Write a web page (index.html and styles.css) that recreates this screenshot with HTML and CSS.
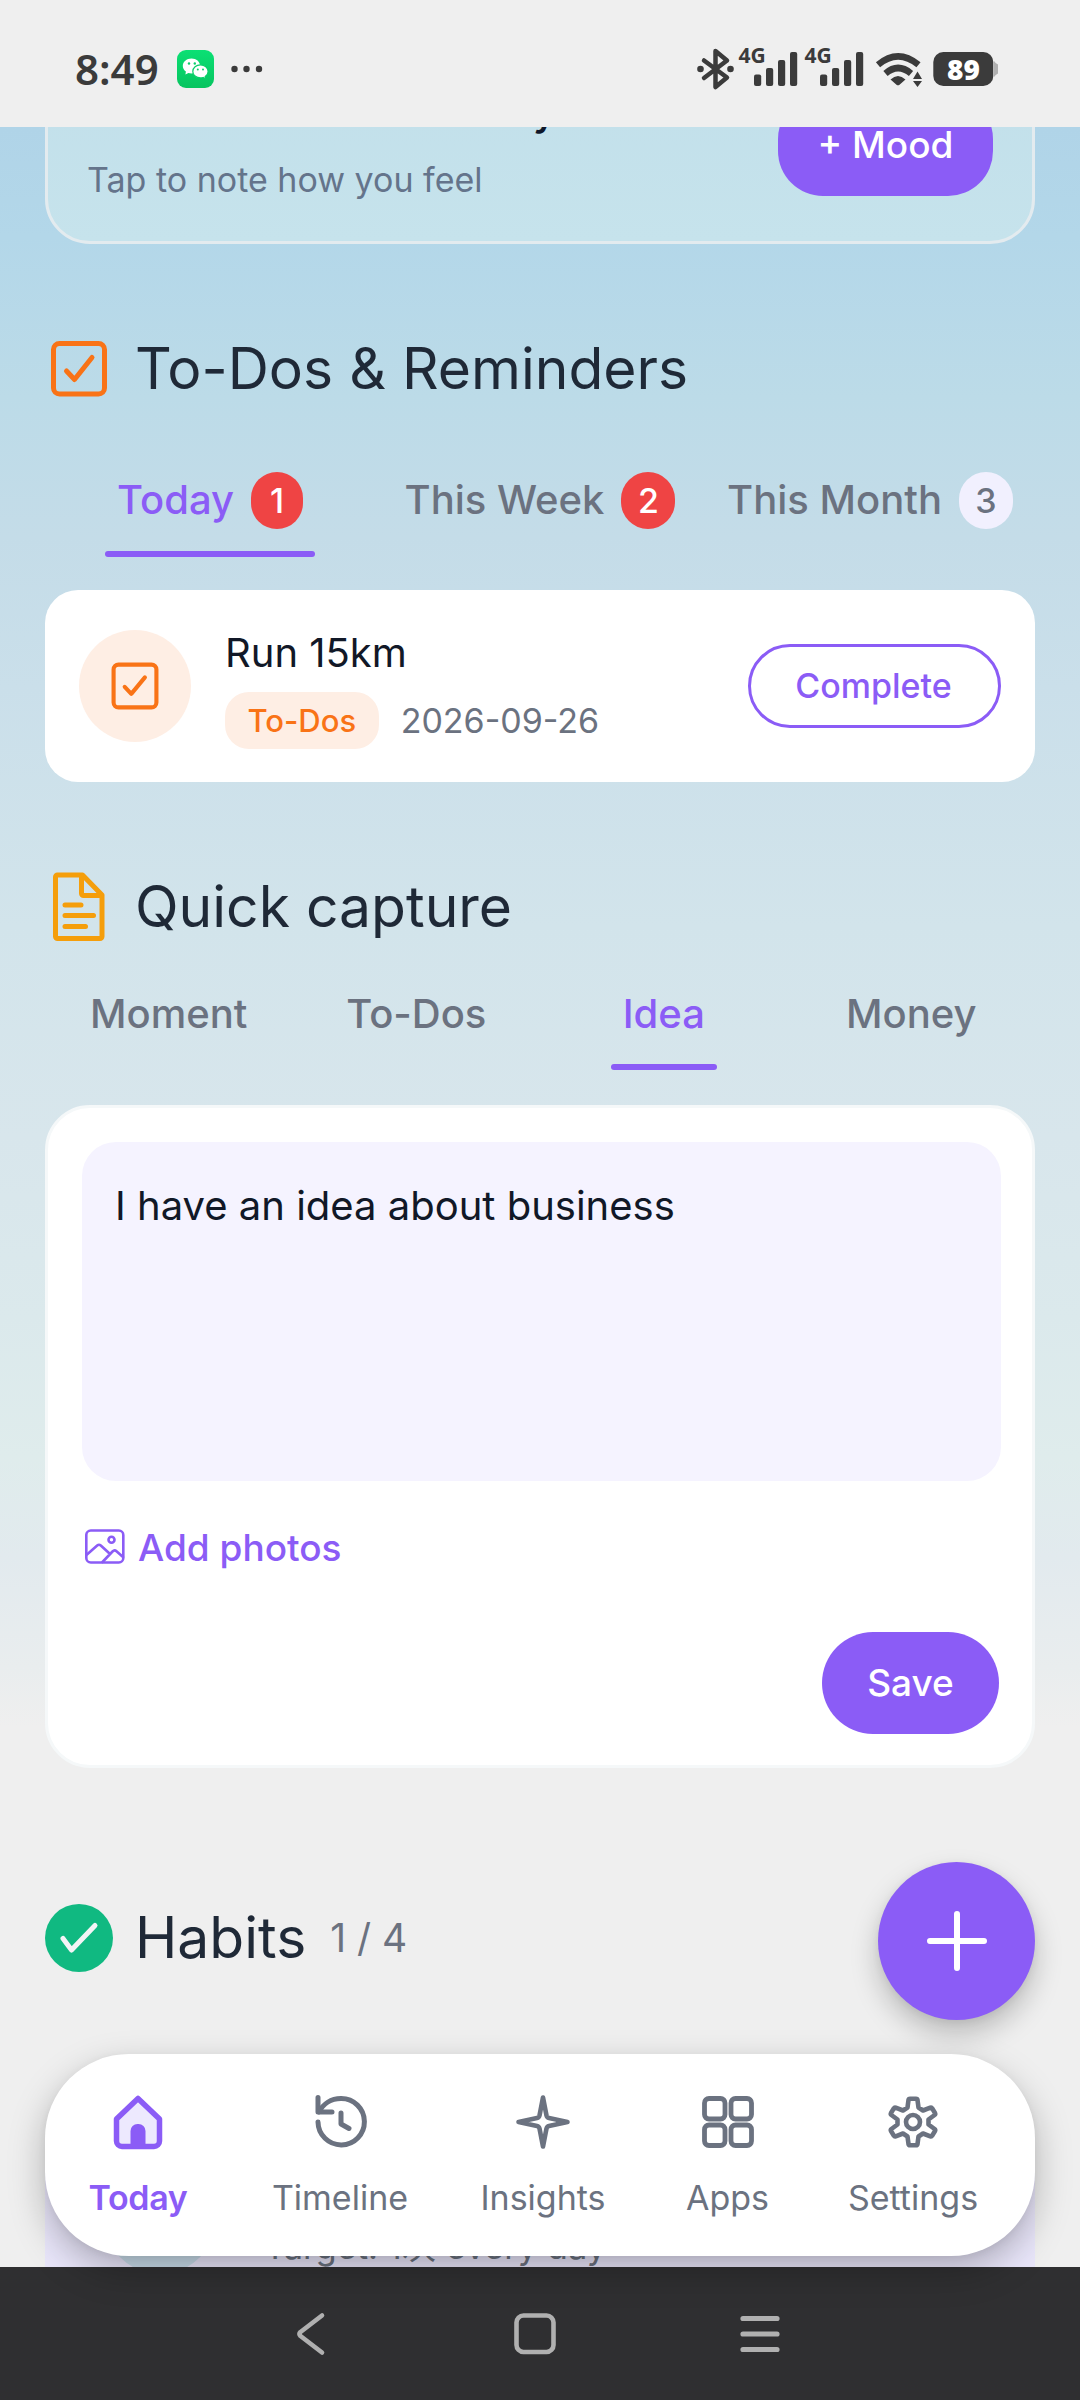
FILE: index.html
```html
<!DOCTYPE html>
<html lang="en">
<head>
<meta charset="utf-8">
<title>Today</title>
<link rel="stylesheet" href="styles.css">
</head>
<body>
<div class="phone">
  <header class="status">
    <div class="status-left">
      <span class="clock">8:49</span>
      <svg class="wechat" width="37" height="38" viewBox="0 0 37 38">
        <defs><linearGradient id="wx" x1="0" y1="0" x2="0" y2="1"><stop offset="0" stop-color="#0be074"/><stop offset="1" stop-color="#07c45f"/></linearGradient></defs>
        <rect width="37" height="38" rx="9" fill="url(#wx)"/>
        <path fill="#fff" d="M14.5 8.500c-4.900 0-8.700 3.300-8.700 7.400 0 2.200 1.200 4.200 3.100 5.600l-.5 3 3-1.500c1 .3 2 .4 3.100.4 4.900 0 8.600-3.300 8.600-7.500s-3.800-7.400-8.600-7.400z"/>
        <path fill="#fff" stroke="#08cf68" stroke-width="1.200" d="M23.500 14.800c-4.300 0-7.700 2.900-7.700 6.600s3.400 6.500 7.700 6.500c.9 0 1.800-.1 2.600-.4l2.700 1.500-.6-2.500c1.800-1.200 2.900-3 2.900-5.100 0-3.700-3.400-6.600-7.600-6.600z"/>
        <g fill="#0ad06a"><circle cx="12" cy="13.500" r="1.200"/><circle cx="17.800" cy="13.500" r="1.200"/><circle cx="20.800" cy="19.500" r="1"/><circle cx="26" cy="19.500" r="1"/></g>
      </svg>
      <svg width="32" height="8" viewBox="0 0 32 8" fill="#3b3b3b"><circle cx="3.500" cy="4" r="3.200"/><circle cx="15.500" cy="4" r="3.200"/><circle cx="28" cy="4" r="3.200"/></svg>
    </div>
    <svg class="status-right" width="304" height="56" viewBox="696 36 304 56" fill="#3b3b3b">
      <g fill="none" stroke="#3b3b3b" stroke-width="4.500" stroke-linecap="round" stroke-linejoin="round">
        <path d="M704 60.500L727 77.500 715.500 87V51L727 60.500 704 78"/>
      </g>
      <circle cx="700.500" cy="69" r="3.300"/><circle cx="730.500" cy="69" r="3.300"/>
      <text class="net" x="738.500" y="63">4G</text>
      <rect x="754" y="74.500" width="7.200" height="11.500" rx="2"/><rect x="766" y="68" width="7.200" height="18" rx="2"/><rect x="778" y="60" width="7.200" height="26" rx="2"/><rect x="790" y="52" width="7.200" height="34" rx="2"/>
      <text class="net" x="804.500" y="63">4G</text>
      <rect x="820" y="74.500" width="7.200" height="11.500" rx="2"/><rect x="832" y="68" width="7.200" height="18" rx="2"/><rect x="844" y="60" width="7.200" height="26" rx="2"/><rect x="856" y="52" width="7.200" height="34" rx="2"/>
      <g fill="none" stroke="#3b3b3b" stroke-width="6.500">
        <path d="M878 64.800Q898 48 918.500 64.800"/>
        <path d="M885.500 73.500Q898 62.500 911 73.500"/>
      </g>
      <path d="M890.500 79.500Q898 72.500 905.500 79.500L899.500 84.700Q898 86 896.500 84.700Z"/>
      <path d="M917.500 71.500L922 79H913ZM917.500 87L922 81H913Z"/>
      <rect x="933.300" y="52" width="60" height="34" rx="10"/>
      <path fill="#b0b0b0" d="M994 61Q995.500 63.500 998 64.500V73.500Q995.500 74.500 994 77Z"/>
      <text class="batt" x="963.500" y="79.500" text-anchor="middle">89</text>
    </svg>
  </header>

  <main class="content">
    <section class="mood">
      <div class="mood-text">
        <div class="mood-title">Mood today</div>
        <div class="mood-sub">Tap to note how you feel</div>
      </div>
      <div class="btn mood-btn">+ Mood</div>
    </section>

    <h2 class="head head-todos">
      <svg class="head-icon" width="68" height="68" viewBox="0 0 68 68" fill="none" stroke="#f97316" stroke-width="5" stroke-linecap="round" stroke-linejoin="round">
        <rect x="8.500" y="8.500" width="51" height="50.500" rx="6"/>
        <path d="M21.500 36L29.500 44.500L47 22.500"/>
      </svg>
      <span>To-Dos &amp; Reminders</span>
    </h2>
    <div class="tabs tabs-3">
      <div class="tab active"><span>Today</span><span class="badge">1</span></div>
      <div class="tab"><span>This Week</span><span class="badge two">2</span></div>
      <div class="tab"><span>This Month</span><span class="badge soft">3</span></div>
    </div>
    <article class="todo">
      <div class="todo-icon">
        <svg width="56" height="56" viewBox="0 0 68 68" fill="none" stroke="#f97316" stroke-width="5" stroke-linecap="round" stroke-linejoin="round">
          <rect x="8" y="8" width="52" height="52" rx="6"/>
          <path d="M21.500 35L29.500 43.500L46 23.500"/>
        </svg>
      </div>
      <div class="todo-body">
        <div class="todo-title">Run 15km</div>
        <div class="todo-meta"><span class="chip">To-Dos</span><span class="date">2026-09-26</span></div>
      </div>
      <div class="btn-outline">Complete</div>
    </article>

    <h2 class="head head-quick">
      <svg class="head-icon" width="68" height="76" viewBox="0 0 68 76" fill="none" stroke="#f59e0b" stroke-width="5" stroke-linecap="round" stroke-linejoin="round">
        <path d="M12 6H37.500L57 26V67.500a2 2 0 0 1-2 2H12.500a2 2 0 0 1-2-2V8a2 2 0 0 1 2-2z"/>
        <path d="M36.500 7.500V24.500a2 2 0 0 0 2 2H56"/>
        <path d="M20 36H36M20 46.500H48.500M20 57.500H40.500"/>
      </svg>
      <span>Quick capture</span>
    </h2>
    <div class="tabs tabs-4">
      <div class="tab">Moment</div>
      <div class="tab">To-Dos</div>
      <div class="tab active">Idea</div>
      <div class="tab">Money</div>
    </div>
    <section class="capture">
      <div class="note">I have an idea about business</div>
      <div class="add">
        <svg width="42" height="38" viewBox="0 0 42 38" fill="none" stroke="#8b5cf6" stroke-width="2.600" stroke-linecap="round" stroke-linejoin="round">
          <rect x="2.300" y="2.500" width="37" height="32" rx="4.500"/>
          <circle cx="27.500" cy="11.800" r="3"/>
          <path d="M3 26.500L13.200 17.500Q15 16 16.800 17.500L25.500 25.500M18.500 34L28.500 23.500Q30.500 21.500 32.500 23.300L39 29"/>
        </svg>
        <span>Add photos</span>
      </div>
      <div class="btn save">Save</div>
    </section>

    <h2 class="head head-habits">
      <svg class="head-icon" width="68" height="68" viewBox="0 0 68 68">
        <circle cx="34" cy="34" r="34" fill="#10b981"/>
        <path d="M18 34.500L26.500 46L50 21.500" fill="none" stroke="#f3f4f6" stroke-width="5" stroke-linecap="round" stroke-linejoin="round"/>
      </svg>
      <span>Habits</span><small>1 / 4</small>
    </h2>
    <article class="habit">
      <div class="habit-dot"></div>
      <div class="habit-target">Target: 1次 every day</div>
    </article>
  </main>

  <div class="fab">
    <svg width="64" height="64" viewBox="0 0 64 64" stroke="#fff" stroke-width="6" stroke-linecap="round"><path d="M32 5V59M5 32H59"/></svg>
  </div>

  <nav class="nav">
    <div class="nav-item active">
      <svg width="60" height="60" viewBox="0 0 60 60" fill="none" stroke="#8b5cf6" stroke-width="5.500" stroke-linecap="round" stroke-linejoin="round">
        <path fill="#ede9fe" d="M30 6.500L51.500 27V49a5.500 5.500 0 0 1-5.500 5.500H14A5.500 5.500 0 0 1 8.500 49V27Z"/>
        <path fill="#8b5cf6" stroke="none" d="M22.500 55V39a7 7 0 0 1 7-7h1a7 7 0 0 1 7 7V55Z"/>
      </svg>
      <span>Today</span>
    </div>
    <div class="nav-item">
      <svg width="60" height="60" viewBox="-1 0 60 60" fill="none" stroke="#6b7280" stroke-width="5" stroke-linecap="round" stroke-linejoin="round">
        <path d="M7 5.500V20H21"/>
        <path d="M8 20C12 12 20 6.500 30 6.500A23.200 23.200 0 1 1 7 30"/>
        <path d="M30 21V32L38 36.500"/>
      </svg>
      <span>Timeline</span>
    </div>
    <div class="nav-item">
      <svg width="60" height="60" viewBox="0 0 60 60" fill="none" stroke="#6b7280" stroke-width="4.600" stroke-linecap="round" stroke-linejoin="round">
        <path d="M30 5.500L33.500 23.500Q34 25.600 36 26L54.500 30L36 34Q34 34.400 33.500 36.500L30 54.500L26.500 36.500Q26 34.400 24 34L5.500 30L24 26Q26 25.600 26.500 23.500Z"/>
      </svg>
      <span>Insights</span>
    </div>
    <div class="nav-item">
      <svg width="60" height="60" viewBox="0 0 60 60" fill="none" stroke="#6b7280" stroke-width="4.800">
        <rect x="6.500" y="6.500" width="20.500" height="20.500" rx="4.500"/><rect x="33" y="6.500" width="20.500" height="20.500" rx="4.500"/>
        <rect x="6.500" y="33" width="20.500" height="20.500" rx="4.500"/><rect x="33" y="33" width="20.500" height="20.500" rx="4.500"/>
      </svg>
      <span>Apps</span>
    </div>
    <div class="nav-item">
      <svg width="60" height="60" viewBox="0 0 60 60" fill="none" stroke="#6b7280" stroke-width="4.600" stroke-linejoin="round">
        <path d="M27 6.800H33Q34.300 6.800 34.500 8L35.500 15.500L40 18.500L47.300 15.600Q48.500 15.200 49.100 16.300L52 21Q52.600 22.200 51.600 23L45.500 27.500V32.500L51.600 37Q52.600 37.800 52 39L49.100 43.700Q48.500 44.800 47.300 44.400L40 41.500L35.500 44.500L34.500 52Q34.300 53.200 33 53.200H27Q25.700 53.200 25.500 52L24.500 44.500L20 41.500L12.700 44.400Q11.500 44.800 10.900 43.700L8 39Q7.400 37.800 8.400 37L14.500 32.500V27.500L8.400 23Q7.400 22.200 8 21L10.900 16.300Q11.500 15.200 12.700 15.600L20 18.500L24.500 15.500L25.500 8Q25.700 6.800 27 6.800Z"/>
        <circle cx="30" cy="30" r="7"/>
      </svg>
      <span>Settings</span>
    </div>
  </nav>

  <footer class="system">
    <svg width="42" height="48" viewBox="0 0 42 48" fill="none" stroke="#b0b0b0" stroke-width="4.600" stroke-linecap="round" stroke-linejoin="round"><path d="M31 5.500L9.500 22Q7.500 24 9.500 26L31 42.500"/></svg>
    <svg class="sys-home" width="48" height="48" viewBox="0 0 48 48" fill="none" stroke="#b0b0b0" stroke-width="4.600"><rect x="5.500" y="5.500" width="37" height="36.500" rx="7"/></svg>
    <svg class="sys-menu" width="48" height="48" viewBox="0 0 48 48" fill="none" stroke="#b0b0b0" stroke-width="5.200" stroke-linecap="round"><path d="M7 8.500H41M7 24H41M7 39.500H41"/></svg>
  </footer>
</div>
</body>
</html>
```
FILE: styles.css
```css
* { box-sizing: border-box; }

body {
  margin: 0;
  font-family: Inter, "Noto Sans CJK SC", sans-serif;
  color: #111827;
}

svg { display: block; flex: none; }

.phone {
  position: relative;
  width: 1080px;
  height: 2400px;
  display: flex;
  flex-direction: column;
  overflow: hidden;
  background: #efefef;
}

/* status bar */
.status {
  height: 127px;
  flex: none;
  display: flex;
  align-items: flex-start;
  justify-content: space-between;
  padding: 36px 80px 0 75px;
  background: #efefef;
}
.status-left {
  display: flex;
  align-items: center;
  height: 66px;
}
.clock {
  width: 102px;
  font: 600 42px/60px "Noto Sans", sans-serif;
  color: #3b3b3b;
}
.wechat { margin-right: 17px; }
.net { font: 700 21px "Noto Sans", sans-serif; }
.batt { font: 800 28px "Open Sans", sans-serif; fill: #fff; }

/* scrolling content */
.content {
  height: 2140px;
  flex: none;
  padding: 0 45px;
  overflow: hidden;
  background: linear-gradient(#b0d4e8 0, #b3d7e9 110px, #bcdbe8 270px, #c4dce8 410px, #cadfea 560px, #d2e4eb 800px, #d8e6ec 1010px, #dbe9ec 1190px, #dfecec 1330px, #e2eaee 1430px, #e9edee 1540px, #efefef 1600px);
}

.btn {
  display: flex;
  align-items: center;
  justify-content: center;
  background: #8b5cf6;
  color: #fff;
  font-weight: 500;
  font-size: 37px;
}

.mood {
  height: 194px;
  margin-top: -77px;
  padding: 24px 39px 27px 39px;
  display: flex;
  justify-content: space-between;
  align-items: flex-start;
  border: 3px solid #e3ebef;
  border-radius: 45px;
  background: linear-gradient(#c1dfea, #c6e3ec);
}
.mood-title {
  width: 470px;
  height: 60px;
  font-size: 42px;
  line-height: 66px;
  font-weight: 500;
  text-align: right;
  color: #0f172a;
  white-space: nowrap;
}
.mood-sub {
  margin-top: 23px;
  font-size: 34px;
  line-height: 40px;
  color: #64748b;
}
.mood-btn {
  width: 215px;
  height: 102px;
  margin-top: 17px;
  padding-bottom: 1px;
  border-radius: 45px;
}

.head {
  margin: 0;
  display: flex;
  align-items: center;
  height: 76px;
  font-size: 57px;
  line-height: 76px;
  font-weight: 400;
  color: #1f2937;
}
.head-icon { margin-right: 22px; }
.head small {
  margin-left: 24px;
  font-size: 39px;
  color: #6b7280;
}
.head-todos { margin-top: 87px; }
.head-quick { margin-top: 87px; }
.head-habits { margin-top: 132px; }

.tabs { display: grid; justify-items: center; }
.tabs-3 { grid-template-columns: repeat(3, 1fr); margin-top: 65px; }
.tabs-4 { grid-template-columns: repeat(4, 1fr); margin-top: 41px; }
.tab {
  position: relative;
  display: flex;
  align-items: flex-start;
  gap: 17px;
  height: 85px;
  padding: 0 12px;
  font-size: 40px;
  line-height: 55px;
  font-weight: 500;
  color: #6b7280;
}
.tab.active { color: #8b5cf6; }
.tab.active::after {
  content: "";
  position: absolute;
  left: 0;
  right: 0;
  bottom: 0;
  height: 6px;
  border-radius: 3px;
  background: #8b5cf6;
}
.tabs-4 .tab { height: 84px; }
.badge {
  width: 52px;
  height: 57px;
  border-radius: 27px;
  background: #ef4444;
  color: #fff;
  font-size: 34px;
  line-height: 57px;
  text-align: center;
}
.badge.two, .badge.soft { width: 54px; }
.badge.soft { background: #f1f0fe; color: #6b7280; }

.todo {
  display: flex;
  align-items: center;
  height: 192px;
  margin-top: 33px;
  padding: 0 34px;
  border-radius: 33px;
  background: #fff;
}
.todo-icon {
  display: flex;
  align-items: center;
  justify-content: center;
  width: 112px;
  height: 112px;
  border-radius: 50%;
  background: #feeee4;
}
.todo-body { flex: 1; padding: 5px 0 0 34px; }
.todo-title { margin-bottom: 14px; font-size: 40px; line-height: 50px; }
.todo-meta { display: flex; align-items: center; gap: 22px; }
.chip {
  height: 57px;
  padding: 0 22.500px;
  border-radius: 24px;
  background: #feeee4;
  color: #f97316;
  font-size: 31px;
  line-height: 57px;
  font-weight: 500;
}
.date { font-size: 34px; color: #6b7280; }
.btn-outline {
  width: 253px;
  height: 84px;
  padding-right: 2px;
  border: 3px solid #8b5cf6;
  border-radius: 42px;
  font-size: 34px;
  line-height: 78px;
  font-weight: 500;
  color: #8b5cf6;
  text-align: center;
}

.capture {
  height: 663px;
  margin-top: 35px;
  padding: 34px 31px 31px 34px;
  display: flex;
  flex-direction: column;
  border: 3px solid #f5f8f9;
  border-radius: 45px;
  background: #fff;
}
.note {
  height: 339px;
  padding: 38px 33px;
  border-radius: 34px;
  background: #f5f3ff;
  font-size: 40px;
  line-height: 52px;
}
.add {
  display: flex;
  align-items: center;
  gap: 12px;
  height: 48px;
  margin-top: 42px;
  padding-left: 2px;
  font-size: 37px;
  font-weight: 500;
  color: #8b5cf6;
}
.save {
  width: 177px;
  height: 102px;
  margin: auto 2px 0 auto;
  padding-bottom: 1px;
  border-radius: 51px;
}

.habit {
  display: flex;
  align-items: flex-end;
  height: 190px;
  margin-top: 154px;
  padding: 0 34px 46px 59px;
  border-radius: 33px;
  background: #e9e6fa;
}
.habit-dot { width: 112px; height: 112px; margin-right: 48px; border-radius: 50%; background: #c8dcea; }
.habit-target { margin-bottom: 7px; font-size: 34.500px; line-height: 40px; color: #6b7280; }

/* floating controls */
.fab {
  position: absolute;
  left: 878px;
  top: 1862px;
  width: 157px;
  height: 158px;
  display: flex;
  align-items: center;
  justify-content: center;
  border-radius: 50%;
  background: #8b5cf6;
  box-shadow: 0 14px 28px rgba(0, 0, 0, .22), 0 2px 8px rgba(0, 0, 0, .06);
}
.nav {
  position: absolute;
  left: 45px;
  top: 2054px;
  width: 990px;
  height: 202px;
  display: grid;
  grid-template-columns: 186px 218px 188px 181px 190px;
  border-radius: 84px;
  background: #fff;
  box-shadow: 0 14px 36px rgba(0, 0, 0, .26), 0 2px 8px rgba(0, 0, 0, .05);
}
.nav-item {
  display: flex;
  flex-direction: column;
  align-items: center;
  padding-top: 38px;
  font-size: 34px;
  line-height: 44px;
  color: #6b7280;
}
.nav-item span { margin-top: 24px; }
.nav-item.active { color: #8b5cf6; font-weight: 600; }
.nav-item.active span { letter-spacing: -.3px; }

/* system navigation */
.system {
  display: flex;
  height: 133px;
  padding: 43px 0 0 291px;
  background: #2f2f31;
}
.sys-home { margin-left: 178px; }
.sys-menu { margin-left: 177px; }
```
